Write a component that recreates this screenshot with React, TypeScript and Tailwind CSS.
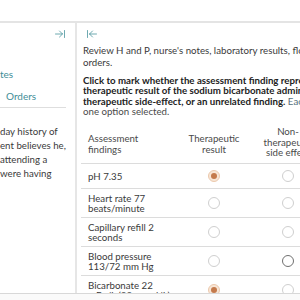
import { ArrowLeftToLine, ArrowRightToLine } from 'lucide-react'

type Mark = 'on' | 'off' | 'focus'

const rows: { label: string[]; marks: Mark[] }[] = [
  { label: ['pH 7.35'], marks: ['on', 'off'] },
  { label: ['Heart rate 77', 'beats/minute'], marks: ['off', 'off'] },
  { label: ['Capillary refill 2', 'seconds'], marks: ['off', 'off'] },
  { label: ['Blood pressure', '113/72 mm Hg'], marks: ['off', 'focus'] },
  { label: ['Bicarbonate 22', 'mEq/L (22 mmol/L)'], marks: ['on', 'off'] },
]

function Radio({ mark }: { mark: Mark }) {
  if (mark === 'on') {
    return (
      <span className="flex h-[12px] w-[12px] items-center justify-center rounded-full border border-[#ecc9ad] bg-[#f8e6d6]">
        <span className="h-[6px] w-[6px] rounded-full bg-[#c47a4c]" />
      </span>
    )
  }
  if (mark === 'focus') {
    return <span className="block h-[12px] w-[12px] rounded-full border-[1.5px] border-[#707070] bg-white" />
  }
  return <span className="block h-[12px] w-[12px] rounded-full border border-[#cfcfcf] bg-white" />
}

export default function App() {
  return (
    <div className="flex h-[300px] w-[300px] flex-col overflow-hidden bg-white font-['Lato',sans-serif] text-[9.7px] leading-[10.5px] text-[#3a3a3a]">
      <div className="h-[23px] shrink-0 border-b-2 border-[#e4e4e4]" />

      <div className="flex min-h-0 flex-1">
        {/* left panel, scrolled off to the left */}
        <div className="w-[77px] shrink-0 overflow-hidden border-r-2 border-[#e6e6e6]">
          <div className="flex h-[17px] items-end justify-end pr-[9px]">
            <ArrowRightToLine className="h-[12px] w-[12px] text-[#3f8e97]" strokeWidth={1.5} />
          </div>
          <div className="mt-[29px] whitespace-nowrap text-[10px] text-[#3f8e97]">tes</div>
          <div className="mt-[11px] w-[66px] border-b border-[#dedede] pb-[6px] pl-[6px] text-[10px] text-[#3f8e97]">
            Orders
          </div>
          <div className="mt-[18px] space-y-[3px] whitespace-nowrap leading-[11px]">
            <p>day history of</p>
            <p>ent believes he,</p>
            <p>attending a</p>
            <p>were having</p>
          </div>
        </div>

        {/* right panel */}
        <div className="min-w-0 flex-1 overflow-hidden pl-[6px]">
          <div className="flex h-[17px] items-end pl-[3px]">
            <ArrowLeftToLine className="h-[12px] w-[12px] text-[#3f8e97]" strokeWidth={1.5} />
          </div>

          <div className="mt-[5px] whitespace-nowrap leading-[11.5px]">
            <p>Review H and P, nurse's notes, laboratory results, flowsheet, and</p>
            <p>orders.</p>
          </div>

          <div className="mt-[7px] whitespace-nowrap leading-[10.3px]">
            <p className="font-bold text-[#222]">Click to mark whether the assessment finding represents a</p>
            <p className="font-bold text-[#222]">therapeutic result of the sodium bicarbonate administration, a non-</p>
            <p>
              <span className="font-bold text-[#222]">therapeutic side-effect, or an unrelated finding.</span>{' '}
              <span className="text-[#55707a]">Each row must have</span>
            </p>
            <p className="text-[#4a4a4a]">one option selected.</p>
          </div>

          <div className="-ml-[2px] mt-[5px] w-[245px]">
            <div className="grid h-[43px] grid-cols-[97px_72px_76px] items-center border-b border-[#dcdcdc] text-[#4a4a4a]">
              <div className="pl-[7px] pt-[3px]">
                Assessment
                <br />
                findings
              </div>
              <div className="pt-[3px] text-center">
                Therapeutic
                <br />
                result
              </div>
              <div className="whitespace-nowrap text-center">
                Non-
                <br />
                therapeutic
                <br />
                side effect
              </div>
            </div>

            {rows.map((r, i) => (
              <div
                key={i}
                className={`grid grid-cols-[97px_72px_76px] items-center border-b border-[#dcdcdc] ${
                  r.label.length > 1 ? 'h-[29px]' : 'h-[25px]'
                }`}
              >
                <div className="whitespace-nowrap pl-[7px] leading-[10.5px]">
                  {r.label.map((l) => (
                    <p key={l}>{l}</p>
                  ))}
                </div>
                {r.marks.map((m, j) => (
                  <div key={j} className="flex justify-center">
                    <Radio mark={m} />
                  </div>
                ))}
              </div>
            ))}
          </div>
        </div>
      </div>

      <div className="h-[7px] shrink-0 border-t border-[#d8d8d8] bg-[#fafafa]" />
    </div>
  )
}
